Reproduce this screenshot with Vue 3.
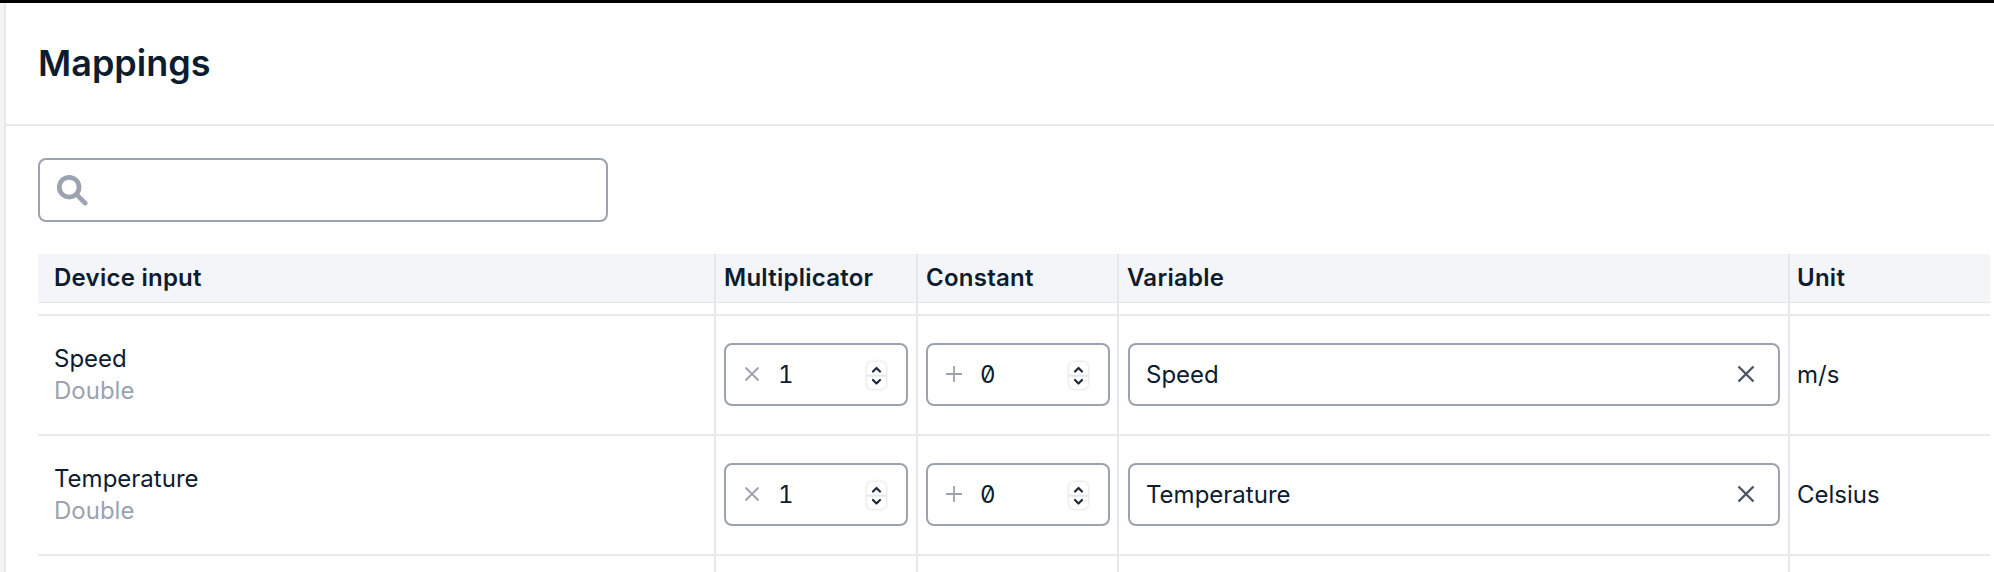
<script setup>
const rows = [
  { name: 'Speed', type: 'Double', variable: 'Speed', unit: 'm/s' },
  { name: 'Temperature', type: 'Double', variable: 'Temperature', unit: 'Celsius' },
]
</script>

<template>
  <div class="page">
    <div class="shell">
      <header class="head"><h1>Mappings</h1></header>
      <main class="body">
        <div class="search">
          <svg class="search-icon" viewBox="0 0 34 34" width="32" height="34" fill="none" stroke="#9ca3af" stroke-width="5">
            <circle cx="14" cy="14" r="10.5" />
            <path d="M22 22l9 9" stroke-linecap="round" />
          </svg>
        </div>
        <div class="table">
          <div class="row hrow">
            <div class="cell c1">Device input</div>
            <div class="cell c2">Multiplicator</div>
            <div class="cell c3">Constant</div>
            <div class="cell c4 hvar">Variable</div>
            <div class="cell c5">Unit</div>
          </div>
          <div class="row spacer">
            <div class="cell c1"></div><div class="cell c2"></div><div class="cell c3"></div><div class="cell c4"></div><div class="cell c5"></div>
          </div>
          <div v-for="r in rows" :key="r.name" class="row drow">
            <div class="cell c1 namecell">
              <div class="name">{{ r.name }}</div>
              <div class="type">{{ r.type }}</div>
            </div>
            <div class="cell c2 lifted">
              <div class="field num">
                <svg class="prefix" viewBox="0 0 16 16" width="16" height="16" stroke="#9ca3af" stroke-width="1.8" fill="none"><path d="M1.5 1.5l13 13M14.5 1.5l-13 13" /></svg>
                <span class="val">1</span>
                <span class="spin">
                  <svg viewBox="0 0 19 27" width="19" height="27" fill="none" stroke="#1f2937" stroke-width="2.2" stroke-linecap="round" stroke-linejoin="round"><path d="M6 9.5l3.5-3.5 3.5 3.5M6 18l3.5 3.5 3.5-3.5" /><path d="M0 13.7h19" stroke="#e5e7eb" stroke-width="2" stroke-linecap="butt" /></svg>
                </span>
              </div>
            </div>
            <div class="cell c3 lifted">
              <div class="field num">
                <svg class="prefix" viewBox="0 0 16 16" width="16" height="16" stroke="#9ca3af" stroke-width="1.8" fill="none"><path d="M8 0v16M0 8h16" /></svg>
                <span class="val">0</span>
                <span class="spin">
                  <svg viewBox="0 0 19 27" width="19" height="27" fill="none" stroke="#1f2937" stroke-width="2.2" stroke-linecap="round" stroke-linejoin="round"><path d="M6 9.5l3.5-3.5 3.5 3.5M6 18l3.5 3.5 3.5-3.5" /><path d="M0 13.7h19" stroke="#e5e7eb" stroke-width="2" stroke-linecap="butt" /></svg>
                </span>
              </div>
            </div>
            <div class="cell c4 lifted">
              <div class="field text">
                <span class="tval">{{ r.variable }}</span>
                <svg viewBox="0 0 18 18" width="18" height="18" stroke="#4b5563" stroke-width="2.4" fill="none"><path d="M1.5 1.5l15 15M16.5 1.5l-15 15" /></svg>
              </div>
            </div>
            <div class="cell c5 unit lifted">{{ r.unit }}</div>
          </div>
          <div class="row tail">
            <div class="cell c1"></div><div class="cell c2"></div><div class="cell c3"></div><div class="cell c4"></div><div class="cell c5"></div>
          </div>
        </div>
      </main>
    </div>
  </div>
</template>

<style>
html, body { margin: 0; height: 572px; overflow: hidden; background: #fff; }
</style>

<style scoped>
.page {
  width: 1994px;
  height: 572px;
  box-sizing: border-box;
  border-top: 3px solid #000;
  background: #f3f4f6;
  padding-left: 4px;
  overflow: hidden;
  font-family: Inter, sans-serif;
  color: #0e1c2f;
}
.shell {
  height: 100%;
  background: #fff;
  border-left: 2px solid #e5e7eb;
}
.head {
  height: 119px;
  border-bottom: 2px solid #e5e7eb;
  display: flex;
  align-items: center;
  padding: 0 0 2px 32px;
}
h1 { margin: 0; font-size: 36px; font-weight: 600; line-height: 1; }
.body { padding: 32px 0 0 32px; }
.search {
  width: 570px;
  height: 64px;
  box-sizing: border-box;
  border: 2px solid #9ca3af;
  border-radius: 8px;
  display: flex;
  align-items: center;
  padding-left: 16px;
}
.table { margin-top: 32px; width: 1952px; }
.row { display: flex; }
.cell { box-sizing: border-box; border-left: 2px solid #e5e7eb; padding-left: 8px; }
.c1 { width: 676px; border-left: 0; padding-left: 16px; }
.c2 { width: 202px; }
.c3 { width: 201px; }
.c4 { width: 671px; padding-left: 9px; }
.c5 { flex: 1; padding-left: 7px; }
.hrow {
  height: 49px;
  box-sizing: border-box;
  background: #f4f5f8;
  border-bottom: 1px solid #e5e7eb;
  font-weight: 600;
  font-size: 24px;
  letter-spacing: 0.25px;
}
.hrow .cell { display: flex; align-items: center; padding-bottom: 2px; }
.hrow .hvar { padding-left: 8px; }
.spacer { height: 13px; box-sizing: border-box; border-bottom: 2px solid #e8eaee; }
.drow { height: 120px; border-bottom: 2px solid #e8eaee; box-sizing: border-box; }
.drow .cell { display: flex; align-items: center; }
.drow .lifted { padding-bottom: 2px; }
.tail { height: 40px; }
.namecell { flex-direction: column; align-items: flex-start !important; justify-content: center; }
.name { font-size: 24px; line-height: 32px; }
.type { font-size: 24px; line-height: 32px; color: #9ca3af; }
.field {
  height: 63px;
  box-sizing: border-box;
  border: 2px solid #9ca3af;
  border-radius: 8px;
  display: flex;
  align-items: center;
  background: #fff;
}
.num { width: 184px; padding: 0 20px 0 18px; }
.text { width: 652px; padding: 0 23px 0 16px; justify-content: space-between; font-size: 24px; }
.val { font-size: 24px; margin-left: 18px; flex: 1; font-feature-settings: "zero", "tnum"; }
.spin {
  width: 19px;
  height: 27px;
  border-radius: 5px;
  background: #fff;
  box-shadow: 0 0 3px rgba(0, 0, 0, 0.22);
  display: flex;
  margin-top: 2px;
}
.unit { font-size: 24px; }
</style>
